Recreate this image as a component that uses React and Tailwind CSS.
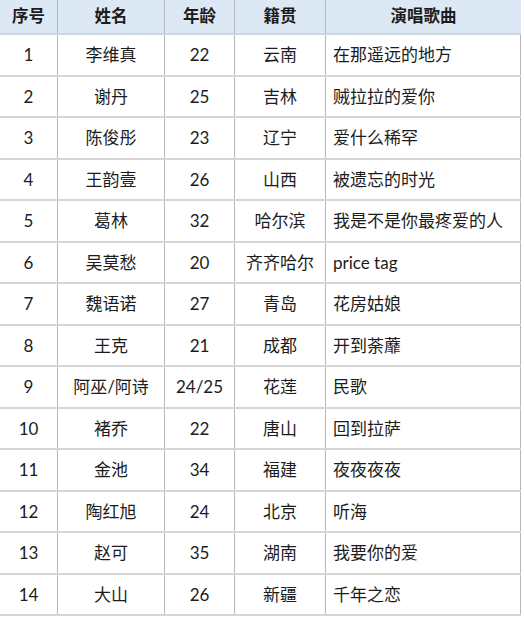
import React from "react";

const rows = [
  ["1", "李维真", "22", "云南", "在那遥远的地方"],
  ["2", "谢丹", "25", "吉林", "贼拉拉的爱你"],
  ["3", "陈俊彤", "23", "辽宁", "爱什么稀罕"],
  ["4", "王韵壹", "26", "山西", "被遗忘的时光"],
  ["5", "葛林", "32", "哈尔滨", "我是不是你最疼爱的人"],
  ["6", "吴莫愁", "20", "齐齐哈尔", "price tag"],
  ["7", "魏语诺", "27", "青岛", "花房姑娘"],
  ["8", "王克", "21", "成都", "开到荼蘼"],
  ["9", "阿巫/阿诗", "24/25", "花莲", "民歌"],
  ["10", "褚乔", "22", "唐山", "回到拉萨"],
  ["11", "金池", "34", "福建", "夜夜夜夜"],
  ["12", "陶红旭", "24", "北京", "听海"],
  ["13", "赵可", "35", "湖南", "我要你的爱"],
  ["14", "大山", "26", "新疆", "千年之恋"],
];

const grid = "grid grid-cols-[58px_107px_70px_91px_195px] w-[521px]";

export default function App() {
  return (
    <div
      className="w-[524px] h-[619px] bg-white text-[#1c1c1c] overflow-hidden"
      style={{ fontFamily: 'Lato, "Noto Sans CJK SC", sans-serif' }}
    >
      <div className="w-[521px] border-r border-[#b8b8b8]">
        <div className={`${grid} h-[35px] bg-[#dce8f4] border-b-2 border-[#cfd6dd] font-bold text-[16.5px]`}>
          <div className="flex items-center justify-center border-r border-[#b8b8b8]">序号</div>
          <div className="flex items-center justify-center border-r border-[#b8b8b8]">姓名</div>
          <div className="flex items-center justify-center border-r border-[#b8b8b8]">年龄</div>
          <div className="flex items-center justify-center border-r border-[#b8b8b8]">籍贯</div>
          <div className="flex items-center justify-center">演唱歌曲</div>
        </div>
        {rows.map((r) => (
          <div key={r[0]} className={`${grid} h-[41.5px] border-b-2 border-[#d6d6d6] text-[17px]`}>
            <div className="flex items-center justify-center border-r border-[#b8b8b8]">{r[0]}</div>
            <div className="flex items-center justify-center border-r border-[#b8b8b8]">{r[1]}</div>
            <div className="flex items-center justify-center border-r border-[#b8b8b8]">{r[2]}</div>
            <div className="flex items-center justify-center border-r border-[#b8b8b8]">{r[3]}</div>
            <div className="flex items-center pl-[7px]">{r[4]}</div>
          </div>
        ))}
      </div>
    </div>
  );
}
